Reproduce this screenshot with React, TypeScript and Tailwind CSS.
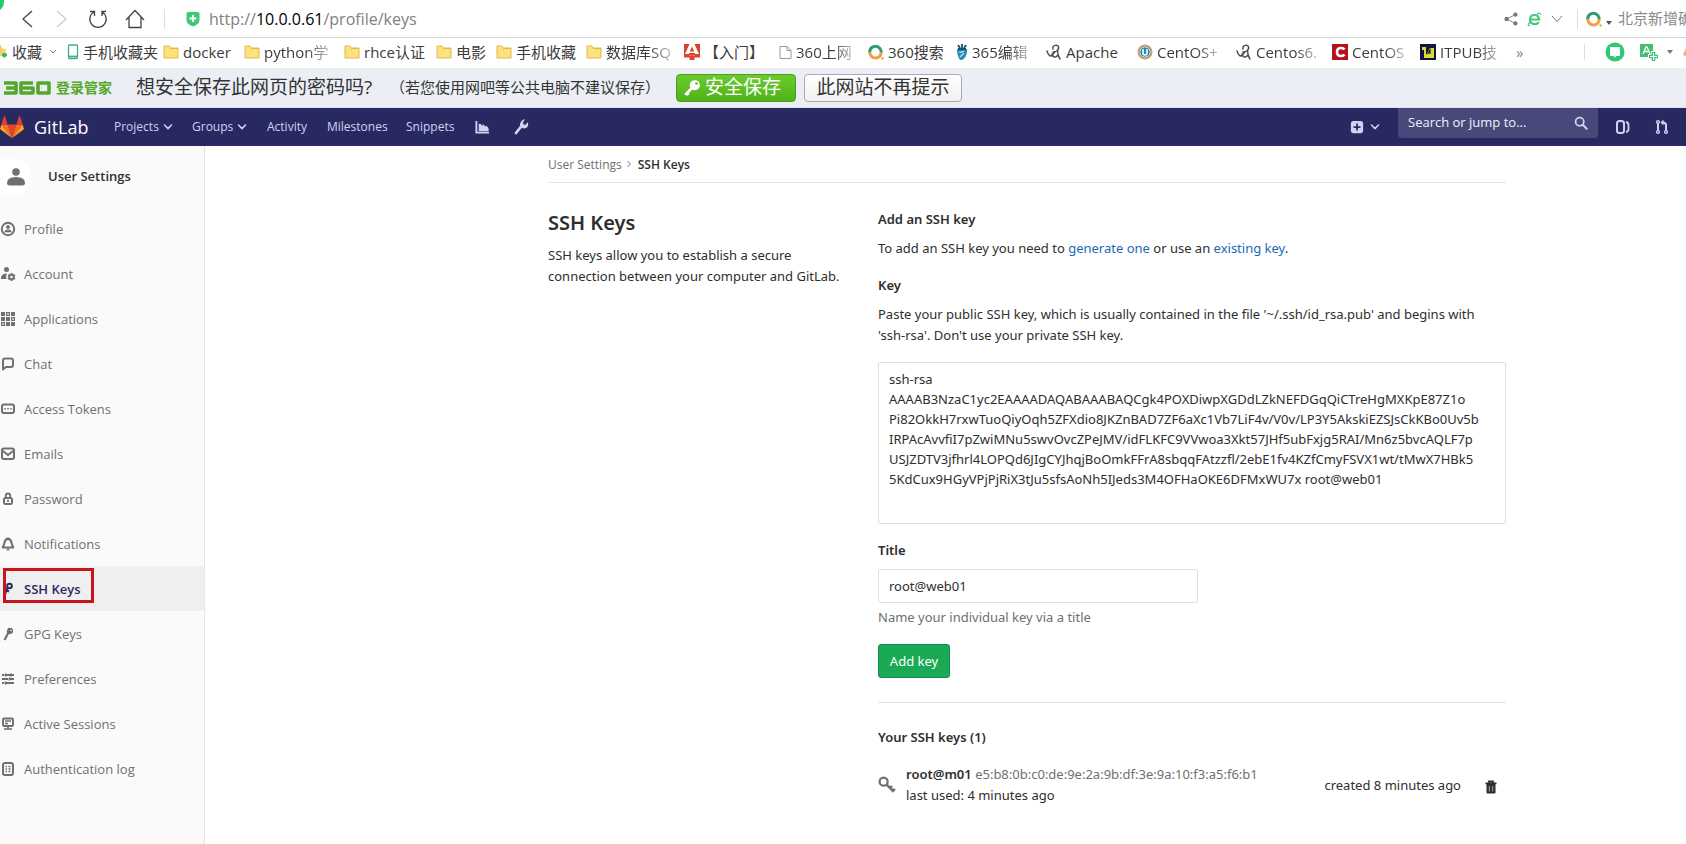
import React, { useState } from 'react';

type IconProps = { className?: string };

const Svg: React.FC<{ className?: string; box?: string; children: React.ReactNode }> = ({
  className = 'h-4 w-4',
  box = '0 0 16 16',
  children,
}) => (
  <svg viewBox={box} fill="none" stroke="currentColor" aria-hidden="true" className={`shrink-0 ${className}`}>
    {children}
  </svg>
);

const ChevronDown = ({ className = 'h-2 w-2.5' }: IconProps) => (
  <Svg box="0 0 10 8" className={className}>
    <path d="M1.5 2L5 5.500 8.500 2" strokeWidth="1.6" strokeLinecap="round" />
  </Svg>
);

const ThinChevron = () => (
  <Svg box="0 0 12 8" className="h-2 w-3">
    <path d="M1 1l5 5.5L11 1" strokeWidth="1" />
  </Svg>
);

const FolderIcon = () => (
  <Svg box="0 0 16 14" className="h-3.5 w-4">
    <path d="M1 1h5l1.5 2H15v10H1z" fill="#fbe27d" stroke="#e3b94f" />
    <path d="M7 3.5h8" stroke="#e3b94f" />
  </Svg>
);

const PhoneIcon = () => (
  <Svg box="0 0 12 16" className="h-4 w-3">
    <rect x="1.5" y="1" width="9" height="13.5" rx="1" stroke="#3cae8b" strokeWidth="1.3" />
    <path d="M2 12.500h8" stroke="#3cae8b" strokeWidth="1.8" />
  </Svg>
);

const StarIcon = () => (
  <Svg box="0 0 9 16" className="h-4 w-[9px]">
    <path d="M0 1l2 4 4 .6-3 3 .8 4L0 11z" fill="#f7d568" stroke="#e7b93b" strokeWidth=".6" />
    <path d="M4.500 8.500v5M2 11h5" stroke="#3fb54c" strokeWidth="2.4" />
  </Svg>
);

const RedAIcon = () => (
  <Svg>
    <path d="M0 0h16v16H0z" fill="#d8452c" stroke="none" />
    <path d="M5.500 0h5L15 10h-4.500v1.500H5.500V10H1z" fill="#fff" stroke="none" />
    <path d="M8 2.500l2.200 5H5.800zM5 9h6v2H9v4H7v-4H5z" fill="#d8452c" stroke="none" />
    <path d="M0 13.500h5.500V16H0zM10.500 13.500H16V16h-5.500z" fill="#fff" stroke="none" />
  </Svg>
);

const PageIcon = () => (
  <Svg box="0 0 13 15" className="h-[15px] w-[13px]">
    <path d="M1 1.500h7l4 4v8H1zM8 1.500v4h4" stroke="#9a9a9a" />
  </Svg>
);

const SearchRing = () => (
  <Svg>
    <path d="M1.800 8.500a5.700 5.700 0 0 1 10.200-4q1.200 1.700 1.200 4" stroke="#2d9f6c" strokeWidth="3" />
    <path d="M1.800 8.300a5.700 5.700 0 0 0 11.400 0" stroke="#f0a044" strokeWidth="3" />
    <circle cx="14.500" cy="14.500" r="1.200" fill="#f0a044" stroke="none" />
  </Svg>
);

const BirdIcon = () => (
  <Svg box="0 0 12 16" className="h-4 w-3">
    <path d="M1 5h10q.5 6-3 9.500-1 1.500-4 1.500Q1 12 1 5z" fill="#2688bd" stroke="none" />
    <path d="M2 1l2 3M6 0v4M10 1L8 4M2 5h8" stroke="#16506f" strokeWidth="1.8" />
    <path d="M3 8c2 1 3 0 5-1M4 13l4-4" stroke="#bfe4f5" strokeWidth="1.2" />
  </Svg>
);

const SwirlIcon = () => (
  <Svg>
    <path
      d="M1 7c1 3 2 5 4 5 2-1 2-3 4-4M7 5c-1-3 3-5 5-3 2 3-1 6-5 6M12 5c-1 4 0 7 2 10M6 10c1 4 4 4 6 1"
      stroke="#4a4a4a"
      strokeWidth="1.4"
      strokeLinecap="round"
    />
  </Svg>
);

const CircleUIcon = () => (
  <Svg>
    <circle cx="8" cy="8" r="6.700" fill="#2c86a8" stroke="#d99a4e" strokeWidth="1.6" />
    <circle cx="8" cy="8" r="5.200" stroke="#d7edf3" />
    <path d="M6 5v4q0 2 2 2t2-2V5" stroke="#fff" strokeWidth="1.6" />
  </Svg>
);

const RedCIcon = () => (
  <Svg>
    <path d="M0 0h16v16H0z" fill="#b5121b" stroke="none" />
    <path d="M12.500 5.500Q11.500 4 9 4 5 4 5 8t4 4q2.500 0 3.500-1.500" stroke="#fff" strokeWidth="2.600" />
  </Svg>
);

const ItpubIcon = () => (
  <Svg>
    <path d="M0 0h16v16H0z" fill="#111545" stroke="none" />
    <path d="M2 3h4v8l4-7h4v10H4V6H2z" fill="#d8dc2b" stroke="none" />
    <path d="M7.500 10l2.500-4v4" stroke="#111545" strokeWidth="1.2" />
  </Svg>
);

const bookmarks = [
  { label: '手机收藏夹', icon: <PhoneIcon />, width: 'w-24' },
  { label: 'docker', icon: <FolderIcon />, width: 'w-[81px]' },
  { label: 'python学', icon: <FolderIcon />, width: 'w-[100px]', fade: true },
  { label: 'rhce认证', icon: <FolderIcon />, width: 'w-[92px]' },
  { label: '电影', icon: <FolderIcon />, width: 'w-[60px]' },
  { label: '手机收藏', icon: <FolderIcon />, width: 'w-[90px]' },
  { label: '数据库SQ', icon: <FolderIcon />, width: 'w-[98px]', fade: true },
  { label: '【入门】', icon: <RedAIcon />, width: 'w-[95px]' },
  { label: '360上网', icon: <PageIcon />, width: 'w-[89px]', fade: true },
  { label: '360搜索', icon: <SearchRing />, width: 'w-[88px]' },
  { label: '365编辑', icon: <BirdIcon />, width: 'w-[90px]', fade: true },
  { label: 'Apache', icon: <SwirlIcon />, width: 'w-[91px]' },
  { label: 'CentOS+', icon: <CircleUIcon />, width: 'w-[99px]', fade: true },
  { label: 'Centos6.', icon: <SwirlIcon />, width: 'w-24', fade: true },
  { label: 'CentOS', icon: <RedCIcon />, width: 'w-[88px]', fade: true },
  { label: 'ITPUB技', icon: <ItpubIcon />, width: 'w-24', fade: true },
];

const BrowserChrome: React.FC = () => {
  const [url, setUrl] = useState('/profile/keys');

  return (
    <div className="relative bg-white">
      <div className="absolute -top-4 -left-4 h-7 w-5 rounded-full bg-[#1fcf6b]" />
      <div className="flex h-[38px] items-center overflow-hidden border-b border-[#d4d4d4] pl-5 text-[#444]">
        <button aria-label="Back" className="w-[34px]">
          <Svg box="0 0 14 20" className="h-5 w-3.5">
            <path d="M12 2L3 10l9 8" strokeWidth="1.3" />
          </Svg>
        </button>
        <button aria-label="Forward" className="w-[34px] text-[#ccc]">
          <Svg box="0 0 14 20" className="h-5 w-3.5">
            <path d="M3 2l9 8-9 8" strokeWidth="1.3" />
          </Svg>
        </button>
        <button aria-label="Reload" className="w-[37px]">
          <Svg box="0 0 20 20" className="h-5 w-5">
            <path d="M6 3a8.200 8.200 0 1 0 8 0M2 2.500h4.500V7M14 7V2.500h4" strokeWidth="1.300" />
          </Svg>
        </button>
        <button aria-label="Home" className="w-[39px]">
          <Svg box="0 0 20 20" className="h-5 w-5">
            <path d="M1 11l9-9.500L19 11M4 8.500V18.500h12V8.500" strokeWidth="1.300" />
          </Svg>
        </button>
        <div className="h-5 w-px bg-[#ddd]" />
        <Svg className="ml-5 h-4 w-4">
          <path d="M1.500 1.500Q8 0 14.500 1.500V9q0 4-6.500 6.500Q1.500 13 1.500 9z" fill="#3fc878" stroke="none" />
          <path d="M8 4v7M4.500 7.500h7" stroke="#fff" strokeWidth="1.800" />
        </Svg>
        <div className="ml-2 flex flex-1 items-center text-[16px] text-[#808080]">
          <span>http://</span>
          <span className="text-black">10.0.0.61</span>
          <input
            aria-label="Address"
            value={url}
            onChange={(e) => setUrl(e.target.value)}
            className="min-w-0 flex-1 bg-transparent outline-none"
          />
        </div>
        <Svg className="h-3.5 w-3.5 text-[#777]">
          <circle cx="3" cy="8" r="2.600" fill="currentColor" stroke="none" />
          <circle cx="13" cy="3" r="2.400" fill="currentColor" stroke="none" />
          <circle cx="13" cy="13" r="2.400" fill="currentColor" stroke="none" />
          <path d="M13 3L3 8l10 5" strokeWidth="1" />
        </Svg>
        <Svg className="ml-2 h-4 w-4 text-[#43c97c]">
          <path d="M4 8.500h9Q13 4 8.500 4T4 8.500t4.500 4.700q3 0 4.300-2" strokeWidth="2.200" />
          <path d="M4 11q-3.500 4 0 3.500M11 3q3.500-2 3.500 1" strokeWidth="1.200" />
        </Svg>
        <button aria-label="More" className="ml-[9px] text-[#777]">
          <ThinChevron />
        </button>
        <div className="ml-3.5 h-5 w-px bg-[#ddd]" />
        <div className="ml-2 flex items-center">
          <SearchRing />
          <Svg box="0 0 6 4" className="mt-2 ml-1 h-1 w-1.5">
            <path d="M0 0h6L3 4z" fill="#555" stroke="none" />
          </Svg>
        </div>
        <span className="ml-1.5 w-[68px] overflow-hidden text-[15px] whitespace-nowrap text-[#8a8a8a]">北京新增确</span>
      </div>

      <div className="flex h-[30px] items-center overflow-hidden pb-0.5 text-[15px] whitespace-nowrap text-[#3c3c3c]">
        <button className="flex w-[67px] shrink-0 items-center gap-[3px]">
          <StarIcon />
          收藏
          <span className="ml-1 text-[#777]">
            <Svg box="0 0 8 6" className="h-1.5 w-2">
              <path d="M1 1l3 3 3-3" />
            </Svg>
          </span>
        </button>
        {bookmarks.map((b) => (
          <a key={b.label} href="#" className={`flex shrink-0 items-center gap-1 ${b.width}`}>
            {b.icon}
            <span className={b.fade ? '[mask-image:linear-gradient(to_right,black_65%,#0005)]' : ''}>{b.label}</span>
          </a>
        ))}
        <span className="text-[#888]">»</span>
        <div className="ml-auto h-4 w-px shrink-0 bg-[#ddd]" />
        <Svg box="0 0 20 20" className="ml-5 h-5 w-5">
          <circle cx="10" cy="10" r="9.500" fill="#2fc874" stroke="none" />
          <path d="M5 5h10v9h-3.500L10 15.500 8.500 14H5z" fill="#fff" stroke="none" />
        </Svg>
        <Svg box="0 0 20 20" className="ml-3.5 h-5 w-5 text-[#43bf74]">
          <path d="M1 2h13v13H1z" fill="currentColor" stroke="none" />
          <path d="M4 12L7 5h1l3 7M5.500 9.500h4" stroke="#fff" strokeWidth="1.300" />
          <path d="M14.500 9v11M9 14.500h11" stroke="#fff" strokeWidth="5" />
          <path d="M14.500 10v9M10 14.500h9" strokeWidth="3.500" />
          <path d="M14.500 11v7M11 14.500h7" stroke="#fff" strokeWidth="1" />
        </Svg>
        <Svg box="0 0 6 4" className="mr-2.5 ml-2 h-1 w-1.5">
          <path d="M0 0h6L3 4z" fill="#777" stroke="none" />
        </Svg>
        <Svg box="0 0 3 8" className="h-2 w-[3px]">
          <path d="M3 0v8L0 7z" fill="#f0b070" stroke="none" />
        </Svg>
      </div>

      <div className="flex h-10 items-center border-b border-[#dbe6f2] bg-[#ebeff5] text-[#333]">
        <div className="flex w-[136px] items-center pl-[3px] font-bold text-[#55a92a]">
          <Svg box="0 0 48 14" className="h-3.5 w-12">
            <path
              d="M1 2h12v10H1M3 7h10M30 2H18v10h12V7H18M35 2h11v10H35z"
              strokeWidth="3.600"
              strokeLinejoin="round"
            />
          </Svg>
          <span className="ml-[5px] text-[14px]">登录管家</span>
        </div>
        <span className="w-[254px] text-[19px]">想安全保存此网页的密码吗?</span>
        <span className="w-[286px] text-[15px] whitespace-nowrap">（若您使用网吧等公共电脑不建议保存）</span>
        <button className="flex h-7 w-[120px] items-center gap-1 rounded-sm border border-[#4c9e1e] bg-linear-to-b from-[#6cca2c] to-[#4fb31b] pl-1.5 text-[19px] leading-none text-white">
          <Svg className="h-[18px] w-[18px]">
            <circle cx="10.500" cy="5.500" r="4.500" fill="#fff" stroke="none" />
            <circle cx="12" cy="4" r="1.200" fill="#5dbd23" stroke="none" />
            <path d="M8 8l-6 6M3.500 12.500l1.500 1.500" stroke="#fff" strokeWidth="2.400" />
          </Svg>
          安全保存
        </button>
        <button className="ml-2 h-7 w-[158px] rounded-sm border border-[#aaa] bg-linear-to-b from-white to-[#f1f1f1] text-[19px] leading-none text-[#333]">
          此网站不再提示
        </button>
      </div>
    </div>
  );
};

const GitLabLogo = () => (
  <svg viewBox="0 0 24 24" aria-hidden="true" className="h-6 w-6 shrink-0">
    <path d="M12 23L7.600 9.500h8.800z" fill="#e24329" />
    <path d="M12 23L7.600 9.500H1.400z" fill="#fc6d26" />
    <path d="M1.400 9.500L.1 13.600c-.1.400 0 .8.300 1L12 23z" fill="#fca326" />
    <path d="M1.400 9.500h6.200L4.900 1.300c-.1-.4-.7-.4-.9 0z" fill="#e24329" />
    <path d="M12 23l4.400-13.500h6.200z" fill="#fc6d26" />
    <path d="M22.600 9.500l1.300 4.100c.1.400 0 .8-.3 1L12 23z" fill="#fca326" />
    <path d="M22.600 9.500h-6.200l2.700-8.200c.1-.4.700-.4.900 0z" fill="#e24329" />
  </svg>
);

const Navbar: React.FC = () => {
  const [query, setQuery] = useState('');

  return (
    <header className="flex h-[38px] items-center bg-[#292961] text-[12px] font-medium text-[#d1d1f0]">
      <a href="#" className="flex w-[114px] items-center gap-2.5 text-[18px] font-normal text-white">
        <GitLabLogo />
        GitLab
      </a>
      <nav className="flex items-center">
        <button className="flex w-[78px] items-center gap-1 font-medium">
          Projects
          <ChevronDown />
        </button>
        <button className="flex w-[75px] items-center gap-1 font-medium">
          Groups
          <ChevronDown />
        </button>
        <a href="#" className="w-[60px]">Activity</a>
        <a href="#" className="w-[79px]">Milestones</a>
        <a href="#" className="w-[69px]">Snippets</a>
        <a href="#" aria-label="Instance Statistics" className="w-[38px]">
          <Svg className="h-[15px] w-[15px]">
            <path d="M1.500 1v12.500H15" strokeWidth="2" />
            <path d="M4 12V4h2l1.500 2L9 4.500 11 7l1.500-1 2 3v3z" fill="currentColor" stroke="none" />
          </Svg>
        </a>
        <a href="#" aria-label="Admin Area">
          <Svg>
            <path d="M3 14l5.500-7" strokeWidth="2.800" strokeLinecap="round" />
            <path d="M12 0L10 3.500l.5 2 2 .3L15 3q1 6-4 6.500Q6.500 9 7 5 8 1 12 0z" fill="currentColor" stroke="none" />
          </Svg>
        </a>
      </nav>
      <div className="ml-auto flex items-start self-stretch">
        <button aria-label="New" className="flex items-center gap-1.5 self-center pr-[18px]">
          <Svg className="h-3.5 w-3.5">
            <rect x="1" y="1" width="14" height="14" rx="3" fill="currentColor" stroke="none" />
            <path d="M8 4v8M4 8h8" stroke="#292961" strokeWidth="2" />
          </Svg>
          <ChevronDown />
        </button>
        <div className="flex h-[30px] w-[200px] items-center rounded-b bg-[#49487a] px-2.5">
          <input
            aria-label="Search"
            placeholder="Search or jump to..."
            value={query}
            onChange={(e) => setQuery(e.target.value)}
            className="min-w-0 flex-1 bg-transparent text-[13px] font-normal text-white outline-none placeholder:text-[#f0f0fa]"
          />
          <Svg className="h-3.5 w-3.5">
            <circle cx="6.500" cy="6.500" r="4.700" strokeWidth="2" />
            <path d="M10 10l4.500 4.500" strokeWidth="2.400" strokeLinecap="round" />
          </Svg>
        </div>
        <a href="#" aria-label="Issues" className="ml-[17px] self-center">
          <Svg>
            <rect x="2" y="2" width="7" height="12" rx="2.500" strokeWidth="2" />
            <path d="M11 3q2.500.5 2.500 3v4q0 2.500-2.500 3" strokeWidth="1.800" />
          </Svg>
        </a>
        <a href="#" aria-label="Merge requests" className="mr-4 ml-[23px] self-center">
          <Svg>
            <circle cx="4" cy="3" r="1.400" strokeWidth="1.400" />
            <circle cx="4" cy="13" r="1.400" strokeWidth="1.400" />
            <circle cx="12" cy="13" r="1.400" strokeWidth="1.400" />
            <path d="M4 4v8" strokeWidth="2" />
            <path d="M12 12V6q0-2.500-3.500-2.500" strokeWidth="2" />
            <path d="M9.500.5v6l-3-3z" fill="currentColor" stroke="none" />
          </Svg>
        </a>
      </div>
    </header>
  );
};

const menu = [
  {
    label: 'Profile',
    icon: (
      <>
        <circle cx="8" cy="8" r="6.200" strokeWidth="2" />
        <circle cx="8" cy="6" r="1.900" fill="currentColor" stroke="none" />
        <path d="M4.500 11.200q0-2.700 3.500-2.700t3.500 2.700z" fill="currentColor" stroke="none" />
      </>
    ),
  },
  {
    label: 'Account',
    icon: (
      <>
        <circle cx="6.500" cy="3.500" r="2.500" fill="currentColor" stroke="none" />
        <path d="M1 13q-.5-5.500 6-5.500-1.500 2-.5 5.500z" fill="currentColor" stroke="none" />
        <circle cx="11.500" cy="11" r="2.300" strokeWidth="2" />
        <path d="M11.500 7v1M11.500 14v1M8 9l1 .6M14 12.400l1 .6M8 13l1-.6M14 9.600l1-.6" strokeWidth="1.800" />
      </>
    ),
  },
  {
    label: 'Applications',
    icon: (
      <>
        <path d="M1 1h4v4H1zM11 1h4v4h-4zM1 6h4v4H1zM6 6h4v4H6zM6 11h4v4H6zM11 11h4v4h-4z" fill="currentColor" stroke="none" />
        <path d="M6.600 1.600h2.800v2.800H6.600zM11.600 6.600h2.800v2.800h-2.800zM1.600 11.600h2.800v2.800H1.600z" strokeWidth="1.200" />
      </>
    ),
  },
  {
    label: 'Chat',
    icon: <path d="M3 13.500V4.500Q3 2.500 5 2.500h6q2 0 2 2V9q0 2-2 2H6z" strokeWidth="2" strokeLinejoin="round" />,
  },
  {
    label: 'Access Tokens',
    icon: (
      <>
        <rect x="2" y="3.500" width="12" height="8.500" rx="2" strokeWidth="2" />
        <path d="M4.300 7.800h1.500M7.300 7.800h1.500M10.300 7.800h1.500" strokeWidth="1.600" />
      </>
    ),
  },
  {
    label: 'Emails',
    icon: (
      <>
        <rect x="2" y="2.500" width="12" height="10.500" rx="2" strokeWidth="2" />
        <path d="M3 5l5 4L13 5" strokeWidth="2" />
      </>
    ),
  },
  {
    label: 'Password',
    icon: (
      <>
        <rect x="4" y="7" width="8" height="6" rx="1.500" strokeWidth="2" />
        <path d="M5.800 7V4.500q0-2 2.200-2t2.200 2V7M8 9v2" strokeWidth="1.800" />
      </>
    ),
  },
  {
    label: 'Notifications',
    icon: (
      <>
        <path d="M8 3q3 0 3.500 3.500.3 2 1.800 5H2.700q1.500-3 1.800-5Q5 3 8 3z" strokeWidth="2" strokeLinejoin="round" />
        <path d="M6.500 2.200h3M6.500 13.500h3" strokeWidth="1.500" />
      </>
    ),
  },
  {
    label: 'SSH Keys',
    icon: (
      <>
        <circle cx="9.500" cy="5" r="2.300" strokeWidth="2" />
        <path d="M7.500 6.500L5 13.500M7 9.500l2 1" strokeWidth="2" />
      </>
    ),
  },
  {
    label: 'GPG Keys',
    icon: (
      <>
        <path d="M8 2h4l1 2v2.500L11 8H8.500L6.500 6z" fill="currentColor" stroke="none" />
        <path d="M8.500 6.500L4.500 14" strokeWidth="2.200" />
        <circle cx="11" cy="4.500" r=".8" fill="#fafafa" stroke="none" />
      </>
    ),
  },
  {
    label: 'Preferences',
    icon: <path d="M2 4h2M6 4h8M2 8h6M10 8h4M2 12h2M6 12h8M5.500 2.500v3M9.500 6.500v3M5.500 10.500v3M11 2.500v3" strokeWidth="1.800" />,
  },
  {
    label: 'Active Sessions',
    icon: (
      <>
        <rect x="3" y="2.500" width="10" height="7.500" rx="1.500" strokeWidth="2" />
        <path d="M5 5h6M5 7.500h3M8 10v3M4 13h8" strokeWidth="1.600" />
      </>
    ),
  },
  {
    label: 'Authentication log',
    icon: (
      <>
        <rect x="3" y="2" width="10" height="12" rx="2" strokeWidth="2" />
        <path d="M5.500 5.500H7M8.500 5.500h2M5.500 8H7M8.500 8h2M5.500 10.500H7M8.500 10.500h2" strokeWidth="1.300" />
      </>
    ),
  },
];

const Sidebar: React.FC = () => (
  <aside className="w-[205px] shrink-0 border-r border-[#e5e5e5] bg-[#fafafa]">
    <div className="flex h-[60px] items-center pt-0.5">
      <div className="flex h-9 w-8 items-center justify-center rounded-r-full bg-white text-[#707070]">
        <Svg box="0 0 20 20" className="h-5 w-5">
          <circle cx="10" cy="5" r="3.800" fill="currentColor" stroke="none" />
          <path d="M1 16q0-6 9-6t9 6q0 2.500-3 2.500H4Q1 18.500 1 16z" fill="currentColor" stroke="none" />
        </Svg>
      </div>
      <span className="ml-4 text-[13px] font-semibold text-[#2e2e2e]">User Settings</span>
    </div>
    <ul className="text-[13px] text-[#707070]">
      {menu.map((item) => {
        const active = item.label === 'SSH Keys';
        return (
          <li key={item.label} className="relative">
            <a
              href="#"
              className={`flex h-[45px] items-center gap-2 ${active ? 'bg-[#efefef] font-semibold text-[#292961]' : ''}`}
            >
              <Svg>{item.icon}</Svg>
              <span className="pt-0.5">{item.label}</span>
            </a>
            {active && <div className="absolute top-0.5 left-[3px] h-[35px] w-[91px] border-3 border-[#c4161c]" />}
          </li>
        );
      })}
    </ul>
  </aside>
);

const sampleKey = `ssh-rsa
AAAAB3NzaC1yc2EAAAADAQABAAABAQCgk4POXDiwpXGDdLZkNEFDGqQiCTreHgMXKpE87Z1o
Pi82OkkH7rxwTuoQiyOqh5ZFXdio8JKZnBAD7ZF6aXc1Vb7LiF4v/V0v/LP3Y5AkskiEZSJsCkKBo0Uv5b
IRPAcAvvfiI7pZwiMNu5swvOvcZPeJMV/idFLKFC9VVwoa3Xkt57JHf5ubFxjg5RAI/Mn6z5bvcAQLF7p
USJZDTV3jfhrl4LOPQd6JIgCYJhqjBoOmkFFrA8sbqqFAtzzfl/2ebE1fv4KZfCmyFSVX1wt/tMwX7HBk5
5KdCux9HGyVPjPjRiX3tJu5sfsAoNh5IJeds3M4OFHaOKE6DFMxWU7x root@web01`;

const SshKeys: React.FC = () => {
  const [key, setKey] = useState(sampleKey);
  const [title, setTitle] = useState('root@web01');

  return (
    <main className="min-w-0 flex-1 pr-[180px] pl-[343px] font-['Noto_Sans',sans-serif] text-[13px] leading-[21px] text-[#2e2e2e]">
      <div className="flex h-[37px] items-center border-b border-[#e5e5e5] font-['Open_Sans',sans-serif] text-[12px]">
        <a href="#" className="text-[#707070]">User Settings</a>
        <Svg box="0 0 6 8" className="mr-1.5 ml-1 h-2 w-1.5 text-[#707070]">
          <path d="M1.500 1l3 3-3 3" />
        </Svg>
        <a href="#" className="font-semibold">SSH Keys</a>
      </div>

      <div className="grid grid-cols-[298px_1fr] gap-8 pt-[26px]">
        <div>
          <h4 className="mb-2 text-[20px] leading-7 font-semibold">SSH Keys</h4>
          <p>SSH keys allow you to establish a secure connection between your computer and GitLab.</p>
        </div>

        <div>
          <h5 className="mb-2 font-semibold">Add an SSH key</h5>
          <p className="mb-4">
            To add an SSH key you need to <a href="#" className="text-[#1b69b6]">generate one</a> or use an{' '}
            <a href="#" className="text-[#1b69b6]">existing key</a>.
          </p>

          <form onSubmit={(e) => e.preventDefault()}>
            <label htmlFor="key" className="mb-2 block font-semibold">Key</label>
            <p className="mb-4">
              Paste your public SSH key, which is usually contained in the file '~/.ssh/id_rsa.pub' and begins with{' '}
              <span className="whitespace-nowrap">'ssh-rsa'.</span> Don't use your private SSH key.
            </p>
            <textarea
              id="key"
              value={key}
              onChange={(e) => setKey(e.target.value)}
              className="mb-4 block h-[162px] w-full resize-none overflow-hidden rounded-xs border border-[#dfdfdf] px-2.5 py-1.5 leading-5 outline-none"
            />
            <label htmlFor="title" className="mb-2 block font-semibold">Title</label>
            <input
              id="title"
              value={title}
              onChange={(e) => setTitle(e.target.value)}
              className="block h-[34px] w-80 rounded-xs border border-[#dfdfdf] px-2.5 outline-none"
            />
            <p className="mt-1 mb-4 text-[#707070]">Name your individual key via a title</p>
            <button className="h-[34px] w-[72px] rounded-[3px] border border-[#168f48] bg-[#1aaa55] text-white">
              Add key
            </button>
          </form>

          <hr className="my-6 border-[#e1e1e1]" />

          <h5 className="mb-4 font-semibold">Your SSH keys (1)</h5>
          <div className="flex items-center">
            <Svg className="h-[18px] w-[18px] text-[#707070]">
              <circle cx="5" cy="5" r="3.600" strokeWidth="2" />
              <path d="M7.500 7.500l6.500 6.500M10.500 11l2-2M13 13.500l2-2" strokeWidth="2.200" />
            </Svg>
            <div className="ml-2.5">
              <div>
                <a href="#" className="font-semibold">root@m01</a>{' '}
                <span className="text-[#707070]">e5:b8:0b:c0:de:9e:2a:9b:df:3e:9a:10:f3:a5:f6:b1</span>
              </div>
              <div>last used: 4 minutes ago</div>
            </div>
            <span className="ml-auto">created 8 minutes ago</span>
            <button aria-label="Remove" className="mx-2 ml-[23px] pt-1">
              <Svg box="0 0 14 14" className="h-3.5 w-3.5">
                <path d="M1.500 3.300h11M5 2.500V1.300h4v1.200" strokeWidth="1.700" />
                <path d="M2.500 4h9v8.500q0 1-1 1h-7q-1 0-1-1z" fill="currentColor" stroke="none" />
                <path d="M5.300 6v5.500M8.700 6v5.500" stroke="#aaa" strokeWidth="1" />
              </Svg>
            </button>
          </div>
        </div>
      </div>
    </main>
  );
};

const App: React.FC = () => (
  <div className="flex min-h-screen flex-col overflow-hidden bg-white font-['Open_Sans','Noto_Sans_CJK_SC',sans-serif]">
    <BrowserChrome />
    <Navbar />
    <div className="flex flex-1">
      <Sidebar />
      <SshKeys />
    </div>
  </div>
);

export default App;
